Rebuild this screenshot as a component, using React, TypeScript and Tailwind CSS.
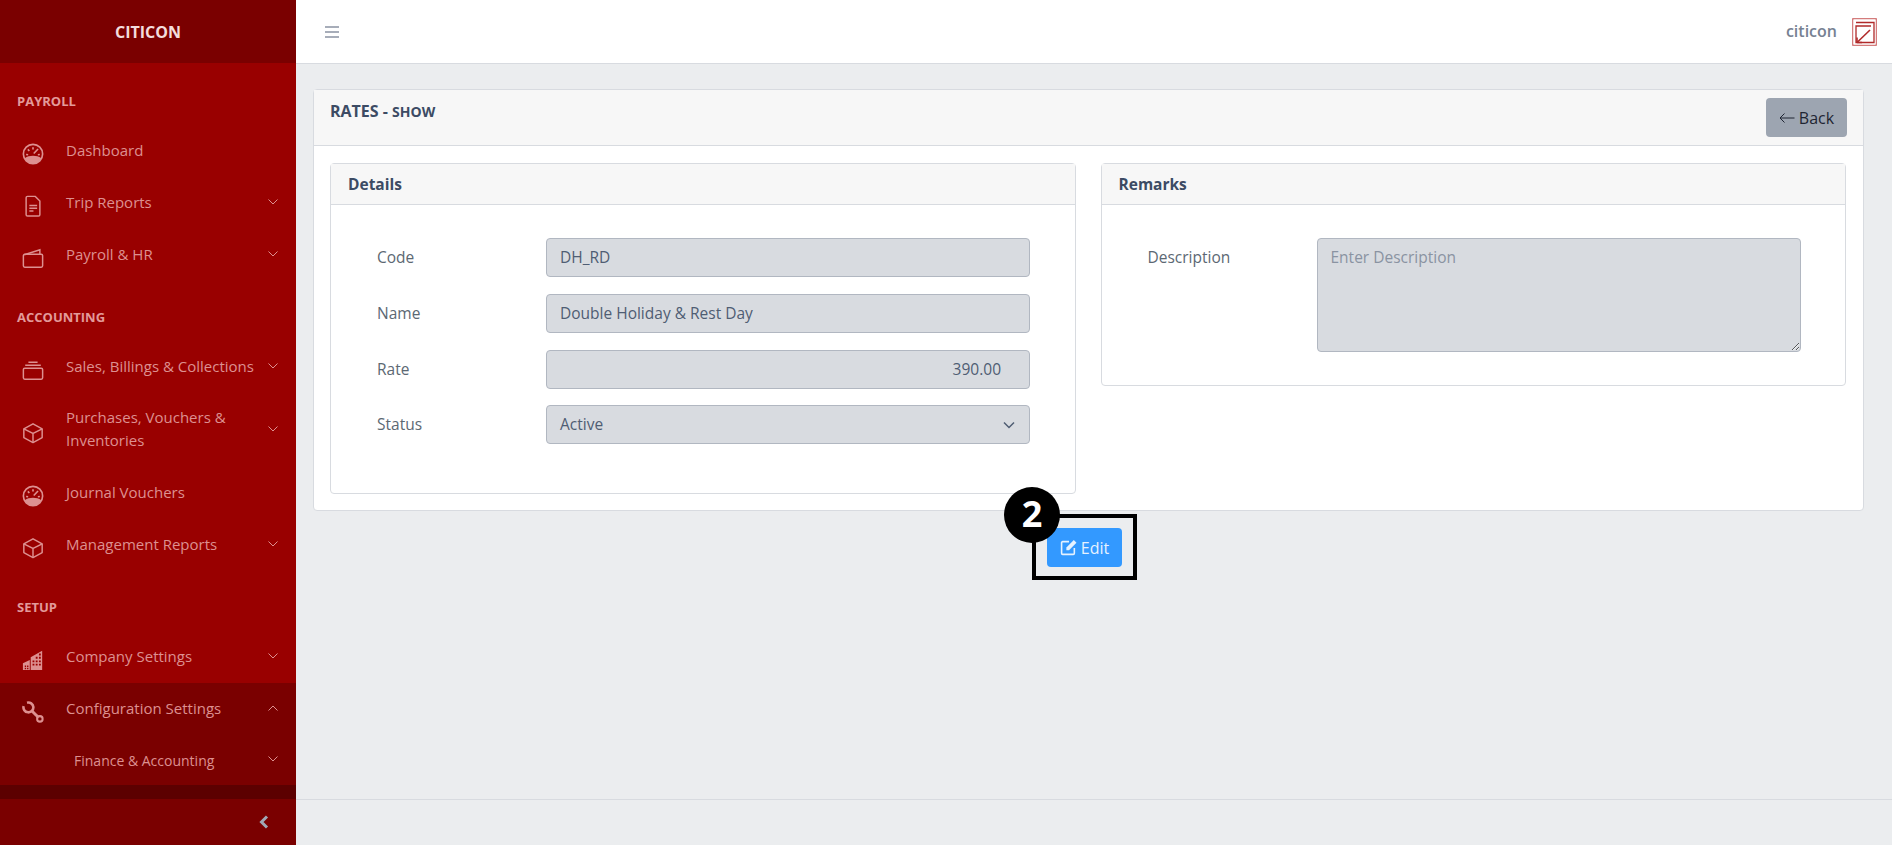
import type { JSX, ReactNode } from "react";

const ICON = "h-[22px] w-[22px] translate-y-[3px] text-[#dd9090]";

function GaugeIcon(): JSX.Element {
	return (
		<svg className={ICON} fill="none" stroke="currentColor" strokeWidth="1.8" viewBox="0 0 24 24">
			<circle cx="12" cy="12" r="10.500" />
			<path d="M3 16.500C5.500 14.500 8.500 13.800 12 13.800s6.500.7 9 2.700C19.500 20.500 16 22.500 12 22.500S4.500 20.500 3 16.500z" fill="currentColor" stroke="none" />
			<path d="M12 4.500v2.500M6.400 7l1.600 1.700M4.500 12.500l2.200.3M19.500 12.500l-2.200.3M17.500 6.500 12.800 11.500" />
		</svg>
	);
}

function FileIcon(): JSX.Element {
	return (
		<svg className={ICON} fill="none" stroke="currentColor" strokeWidth="1.6" viewBox="0 0 24 24">
			<path d="M4.500 3A1.500 1.500 0 0 1 6 1.500h8.500l5 5v15a1.500 1.500 0 0 1-1.500 1.500H6a1.500 1.500 0 0 1-1.500-1.500z" />
			<path d="M8 11.500h8.500M8 14.500h8.500M8 17.500h4.500" strokeWidth="1.800" />
		</svg>
	);
}

function WalletIcon(): JSX.Element {
	return (
		<svg className={ICON} fill="none" stroke="currentColor" strokeWidth="1.6" viewBox="0 0 24 24">
			<path d="M1.500 9.500A1.500 1.500 0 0 1 3 8h18a1.500 1.500 0 0 1 1.500 1.500v11A1.500 1.500 0 0 1 21 22H3a1.500 1.500 0 0 1-1.500-1.500z" />
			<path d="M2.500 8.500 19.500 3V8" />
		</svg>
	);
}

function LayersIcon(): JSX.Element {
	return (
		<svg className={ICON} fill="none" stroke="currentColor" strokeWidth="1.6" viewBox="0 0 24 24">
			<rect height="12" rx="1.500" width="21" x="1.500" y="10" />
			<path d="M3.500 6.800h17M7 3.500h10" />
		</svg>
	);
}

function CubeIcon(): JSX.Element {
	return (
		<svg className={ICON} fill="none" stroke="currentColor" strokeWidth="1.6" viewBox="0 0 24 24">
			<path d="M12 2 22 7.500v9.500L12 22.500 2 17V7.500z" strokeLinejoin="round" />
			<path d="M2 7.500 12 12.500l10-5M12 12.500v10" />
		</svg>
	);
}

function BuildingIcon(): JSX.Element {
	return (
		<svg className={ICON} fill="currentColor" viewBox="0 0 24 24">
			<path d="M9.500 9 22 2v21H9.500zm2 3.500v2h2v-2zm3.500 0v2h2v-2zm3.500 0v2h2v-2zm-7 3.500v2h2v-2zm3.500 0v2h2v-2zm3.500 0v2h2v-2zm-3.500-7.500v2h2v-2zm3.500 0v2h2v-2zm0-3.500v2h2V5zM1 15.500 8.500 12v11H1zM3 18v1.700h1.500V18zm2.500 0v1.700H7V18zM3 20.500V22h1.500v-1.500zm2.500 0V22H7v-1.500z" fillRule="evenodd" />
		</svg>
	);
}

function WrenchIcon(): JSX.Element {
	return (
		<svg className={ICON} fill="none" stroke="currentColor" viewBox="0 0 24 24">
			<path d="M1.800 5.500A5.400 5.400 0 1 0 5.500 1.800" strokeWidth="2.800" />
			<path d="M10 10 17.500 17.500" strokeWidth="3.200" />
			<circle cx="19.500" cy="19.500" r="3" strokeWidth="2.200" />
		</svg>
	);
}

function Chevron({ up = false }: { up?: boolean }): JSX.Element {
	return (
		<svg className="-mt-[3px] h-[10px] w-[10px] shrink-0 text-[#dd9090]" fill="none" stroke="currentColor" strokeWidth="1" viewBox="0 0 10 10">
			<path d={up ? "M.5 7.500 5 3l4.500 4.500" : "M.5 2.500 5 7l4.500-4.500"} />
		</svg>
	);
}

function NavItem({ icon, label, arrow = true, up = false, tall = false }: { icon: ReactNode; label: ReactNode; arrow?: boolean; up?: boolean; tall?: boolean }): JSX.Element {
	return (
		<div className={`flex items-center pr-[18px] pl-[22px] ${tall ? "h-[74px]" : "h-[52px]"}`}>
			<span className="flex w-[44px] shrink-0 items-center">{icon}</span>
			<span className="flex-1 -translate-y-[1px] text-[#dd9090] text-[15px] leading-[23px]">{label}</span>
			{arrow && <Chevron up={up} />}
		</div>
	);
}

function SectionTitle({ children, first = false }: { children: string; first?: boolean }): JSX.Element {
	return (
		<div className={`flex items-end pb-[14px] pl-[17px] font-bold text-[#e39a9a] text-[13px] ${first ? "h-[62px]" : "h-[60px]"}`}>
			{children}
		</div>
	);
}

function Field({ label, children, tight = false }: { label: string; children: ReactNode; tight?: boolean }): JSX.Element {
	return (
		<div className={`flex items-center ${tight ? "mb-[16px]" : "mb-[17px]"}`}>
			<label className="w-[215px] shrink-0 pl-[46px] text-[#5c6873] text-[15.5px]">{label}</label>
			{children}
		</div>
	);
}

const INPUT = "flex h-[39px] w-[484px] items-center rounded-[4px] border border-[#b1b7c1] bg-[#d8dbe0] px-[13px] text-[#4f5d73] text-[15.5px]";

export default function App(): JSX.Element {
	return (
		<div className="flex h-[845px] w-full overflow-hidden bg-[#ebedef] font-['Open_Sans',sans-serif] text-[15px]">
			<aside className="flex h-full w-[296px] shrink-0 flex-col bg-[#990000]">
				<div className="flex h-[63px] shrink-0 items-center justify-center bg-[#7a0000] font-bold text-[#f3dcdc] text-[16px]">
					CITICON
				</div>
				<nav className="min-h-0 flex-1 overflow-hidden">
					<SectionTitle first>PAYROLL</SectionTitle>
					<NavItem arrow={false} icon={<GaugeIcon />} label="Dashboard" />
					<NavItem icon={<FileIcon />} label="Trip Reports" />
					<NavItem icon={<WalletIcon />} label="Payroll & HR" />
					<SectionTitle>ACCOUNTING</SectionTitle>
					<NavItem icon={<LayersIcon />} label="Sales, Billings & Collections" />
					<NavItem icon={<CubeIcon />} label={<>Purchases, Vouchers &amp;<br />Inventories</>} tall />
					<NavItem arrow={false} icon={<GaugeIcon />} label="Journal Vouchers" />
					<NavItem icon={<CubeIcon />} label="Management Reports" />
					<SectionTitle>SETUP</SectionTitle>
					<NavItem icon={<BuildingIcon />} label="Company Settings" />
					<div className="bg-[#7a0000]">
						<NavItem icon={<WrenchIcon />} label="Configuration Settings" up />
						<div className="flex h-[50px] items-center pr-[18px] pl-[74px] text-[#dd9090] text-[14px]">
							<span className="flex-1">Finance &amp; Accounting</span>
							<Chevron />
						</div>
					</div>
					<div className="h-[14px] bg-[#5c0000]" />
				</nav>
				<div className="flex h-[46px] shrink-0 items-center justify-end bg-[#7a0000] pr-[26px]">
					<svg className="h-[14px] w-[12px] text-[#a0a8b5]" fill="none" stroke="currentColor" strokeWidth="3" viewBox="0 0 12 14">
						<path d="M9 1.500 3.500 7 9 12.500" />
					</svg>
				</div>
			</aside>
			<div className="flex min-w-0 flex-1 flex-col">
				<header className="flex h-[64px] shrink-0 items-center justify-between border-[#d8dbe0] border-b bg-white pr-[15px] pl-[29px]">
					<svg className="h-[14px] w-[14px] text-[#8a93a2]" fill="none" stroke="currentColor" strokeWidth="1.300" viewBox="0 0 14 14">
						<path d="M0 2h14M0 7h14M0 12h14" />
					</svg>
					<div className="flex items-center gap-[15px]">
						<span className="-translate-y-[1px] font-semibold text-[#768192] text-[16px]">citicon</span>
						<svg className="h-[28px] w-[25px] text-[#b02a2a]" fill="none" stroke="currentColor" viewBox="0 0 25 28">
							<rect height="27" rx="1.500" stroke="#d47c7c" strokeWidth="1.500" width="24" x=".5" y=".5" />
							<path d="M4 4.500h18V24.500H4V8h15" strokeWidth="1.300" />
							<path d="M18 12 5 24.500" strokeWidth="1.600" />
							<path d="M5 24.500h5M5 24.500v-5" strokeWidth="1.600" />
						</svg>
					</div>
				</header>
				<main className="min-h-0 flex-1 pt-[25px] pr-[28px] pl-[17px]">
					<section className="rounded-[4px] border border-[#d8dbe0] bg-white">
						<div className="flex h-[56px] items-start justify-between border-[#d8dbe0] border-b bg-[#f7f7f7] pt-[8px] pr-[16px] pl-[16px]">
							<h1 className="mt-[1px] font-bold text-[#3c4b64] text-[16px]">
								RATES - <span className="text-[14px]">SHOW</span>
							</h1>
							<button className="flex h-[39px] w-[81px] items-center justify-center gap-[4px] rounded-[4px] bg-[#9da5b1] text-[#1f2533] text-[16px]" type="button">
								<svg className="h-[12px] w-[16px]" fill="none" stroke="currentColor" strokeWidth="1" viewBox="0 0 16 12">
									<path d="M15.500 6H1M5.500 1.500 1 6l4.500 4.500" />
								</svg>
								Back
							</button>
						</div>
						<div className="flex items-start gap-[25px] pt-[17px] pr-[17px] pb-[16px] pl-[16px]">
							<div className="h-[331px] flex-1 rounded-[4px] border border-[#d8dbe0]">
								<div className="flex h-[41px] items-center border-[#d8dbe0] border-b bg-[#f7f7f7] px-[17px] pt-[2px] font-bold text-[#3c4b64] text-[15.5px]">Details</div>
								<div className="pt-[33px]">
									<Field label="Code"><div className={INPUT}>DH_RD</div></Field>
									<Field label="Name"><div className={INPUT}>Double Holiday &amp; Rest Day</div></Field>
									<Field label="Rate" tight><div className={`${INPUT} justify-end pr-[28px]`}>390.00</div></Field>
									<Field label="Status">
										<div className={`${INPUT} justify-between`}>
											Active
											<svg className="mr-[1px] h-[12px] w-[12px] text-[#4f5d73]" fill="none" stroke="currentColor" strokeWidth="1.500" viewBox="0 0 12 12">
												<path d="M1 3.500 6 8.500l5-5" />
											</svg>
										</div>
									</Field>
								</div>
							</div>
							<div className="h-[223px] flex-1 rounded-[4px] border border-[#d8dbe0]">
								<div className="flex h-[41px] items-center border-[#d8dbe0] border-b bg-[#f7f7f7] px-[17px] pt-[2px] font-bold text-[#3c4b64] text-[15.5px]">Remarks</div>
								<div className="pt-[33px]">
									<div className="flex items-start">
										<label className="w-[215px] shrink-0 pt-[8px] pl-[46px] text-[#5c6873] text-[15.5px]">Description</label>
										<textarea
											className="h-[114px] w-[484px] rounded-[4px] border border-[#b1b7c1] bg-[#d8dbe0] px-[13px] pt-[7px] pb-[6px] text-[15.5px] placeholder:text-[#8a93a2]"
											disabled
											placeholder="Enter Description"
										/>
									</div>
								</div>
							</div>
						</div>
					</section>
					<div className="relative mt-[17px] flex justify-center pr-[8px]">
						<button className="flex h-[39px] w-[75px] items-center justify-center gap-[4px] rounded-[4px] bg-[#39f] text-[#e6f2ff] text-[16px]" type="button">
							<svg className="h-[17px] w-[17px]" fill="none" stroke="currentColor" strokeWidth="1.500" viewBox="0 0 16 16">
								<path d="M13.500 8.500v5a1 1 0 0 1-1 1h-10a1 1 0 0 1-1-1v-10a1 1 0 0 1 1-1h6" />
								<path d="M6 10.500V8l7-7 2.500 2.500-7 7z" fill="currentColor" stroke="none" />
							</svg>
							Edit
						</button>
						<div className="pointer-events-none absolute top-[-14px] left-[719px] h-[66px] w-[105px] border-[4px] border-black" />
						<div className="absolute top-[-41px] left-[691px] flex h-[56px] w-[56px] items-center justify-center rounded-full bg-black pb-[2px] font-bold text-[36px] text-white">2</div>
					</div>
				</main>
				<footer className="h-[46px] shrink-0 border-[#d8dbe0] border-t bg-[#ebedef]" />
			</div>
		</div>
	);
}
